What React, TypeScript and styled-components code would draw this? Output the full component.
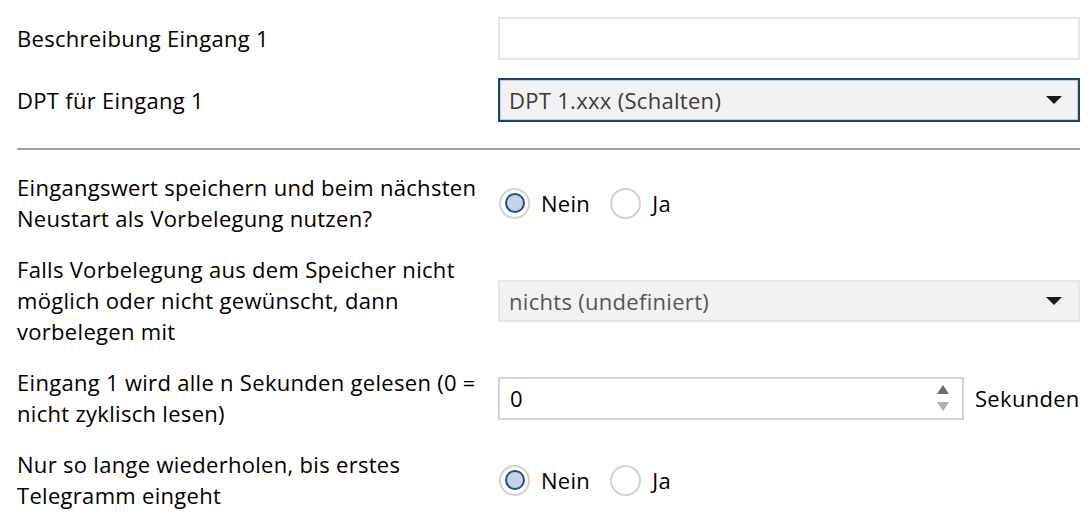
import React from "react";
import styled, { createGlobalStyle } from "styled-components";

const Global = createGlobalStyle`
  html, body { margin: 0; padding: 0; background: #ffffff; }
  body { font-family: "Open Sans", "Noto Sans", sans-serif; color: #000; }
  * { box-sizing: border-box; }
`;

const Page = styled.div`
  width: 1090px;
  padding: 17px 10px 0 17px;
  display: flex;
  flex-direction: column;
`;

const Section = styled.div<{ $gap: number }>`
  display: flex;
  flex-direction: column;
  gap: ${(p) => p.$gap}px;
`;

const Row = styled.div`
  display: grid;
  grid-template-columns: 481px 1fr;
  align-items: center;
`;

const Label = styled.div`
  font-size: 22px;
  letter-spacing: 0.3px;
  line-height: 31px;
  color: #000;
`;

const TextBox = styled.div`
  height: 43px;
  border: 2px solid #e6e6e6;
  background: #fff;
`;

const SelectBox = styled.div<{ $focused?: boolean; $h: number }>`
  height: ${(p) => p.$h}px;
  display: flex;
  align-items: center;
  justify-content: space-between;
  padding: 0 16px 0 9px;
  background: #f2f2f2;
  border: 2px solid ${(p) => (p.$focused ? "#1c4576" : "#e6e6e6")};
  box-shadow: ${(p) => (p.$focused ? "inset 0 0 0 1px #c9c9c9" : "none")};
  font-size: 22px;
  letter-spacing: 0.3px;
  color: ${(p) => (p.$focused ? "#3a3a3a" : "#555555")};
`;

const Arrow = styled.span`
  width: 0;
  height: 0;
  border-left: 8px solid transparent;
  border-right: 8px solid transparent;
  border-top: 8px solid #1a1a1a;
`;

const RadioGroup = styled.div`
  display: flex;
  align-items: center;
  padding-left: 1px;
`;

const RadioItem = styled.label`
  display: flex;
  align-items: center;
  gap: 11px;
  margin-right: 20px;
  font-size: 22px;
  letter-spacing: 0.3px;
  color: #000;
`;

const RadioOuter = styled.span<{ $checked?: boolean }>`
  width: 31px;
  height: 31px;
  border-radius: 50%;
  border: 2px solid #d2d2d2;
  background: #fff;
  display: flex;
  align-items: center;
  justify-content: center;
  &::after {
    content: "";
    display: ${(p) => (p.$checked ? "block" : "none")};
    width: 20px;
    height: 20px;
    border-radius: 50%;
    border: 2px solid #1c4f80;
    background: #c6d3e2;
    box-sizing: border-box;
  }
`;

const NumberRow = styled.div`
  display: flex;
  align-items: center;
  gap: 11px;
`;

const NumberBox = styled.div`
  width: 466px;
  height: 43px;
  border: 2px solid #d4d4d4;
  background: #fff;
  display: flex;
  align-items: center;
  justify-content: space-between;
  padding: 0 13px 0 10px;
  font-size: 22px;
  color: #000;
`;

const Spinner = styled.div`
  display: flex;
  flex-direction: column;
  gap: 8px;
`;

const SpinArrow = styled.span<{ $up?: boolean }>`
  width: 0;
  height: 0;
  border-left: 6px solid transparent;
  border-right: 6px solid transparent;
  ${(p) =>
    p.$up
      ? "border-bottom: 9px solid #6e6e6e;"
      : "border-top: 9px solid #b0b0b0;"}
`;

const Unit = styled.span`
  font-size: 22px;
  letter-spacing: 0.3px;
  color: #000;
`;

const Divider = styled.div`
  height: 2px;
  background: #a0a0a0;
  margin: 26px 0 22px 0;
`;

const Radios: React.FC<{ value: "nein" | "ja" }> = ({ value }) => (
  <RadioGroup>
    <RadioItem>
      <RadioOuter $checked={value === "nein"} />
      Nein
    </RadioItem>
    <RadioItem>
      <RadioOuter $checked={value === "ja"} />
      Ja
    </RadioItem>
  </RadioGroup>
);

export default function App() {
  return (
    <>
      <Global />
      <Page>
        <Section $gap={18}>
          <Row>
            <Label>Beschreibung Eingang 1</Label>
            <TextBox />
          </Row>
          <Row>
            <Label>DPT für Eingang 1</Label>
            <SelectBox $focused $h={44}>
              <span>DPT 1.xxx (Schalten)</span>
              <Arrow />
            </SelectBox>
          </Row>
        </Section>
        <Divider />
        <Section $gap={20}>
          <Row>
            <Label>
              Eingangswert speichern und beim nächsten
              <br />
              Neustart als Vorbelegung nutzen?
            </Label>
            <Radios value="nein" />
          </Row>
          <Row>
            <Label>
              Falls Vorbelegung aus dem Speicher nicht
              <br />
              möglich oder nicht gewünscht, dann
              <br />
              vorbelegen mit
            </Label>
            <SelectBox $h={42}>
              <span>nichts (undefiniert)</span>
              <Arrow />
            </SelectBox>
          </Row>
          <Row>
            <Label>
              Eingang 1 wird alle n Sekunden gelesen (0 =
              <br />
              nicht zyklisch lesen)
            </Label>
            <NumberRow>
              <NumberBox>
                <span>0</span>
                <Spinner>
                  <SpinArrow $up />
                  <SpinArrow />
                </Spinner>
              </NumberBox>
              <Unit>Sekunden</Unit>
            </NumberRow>
          </Row>
          <Row>
            <Label>
              Nur so lange wiederholen, bis erstes
              <br />
              Telegramm eingeht
            </Label>
            <Radios value="nein" />
          </Row>
        </Section>
      </Page>
    </>
  );
}
